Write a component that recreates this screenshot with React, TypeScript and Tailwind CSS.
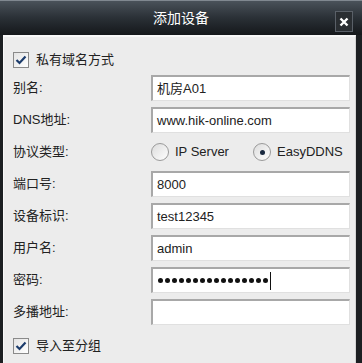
import React from 'react';

const cjk = "font-['Liberation_Sans','Noto_Sans_CJK_SC',sans-serif]";

const Check = () => (
  <div className="w-[16px] h-[16px] border border-[#8a8a8a] bg-gradient-to-br from-[#e4e4e4] to-white flex items-center justify-center shrink-0">
    <svg width="12" height="10" viewBox="0 0 12 10">
      <path d="M1.5 5 L4.5 8 L10.5 1.5" fill="none" stroke="#1c3c6c" strokeWidth="2.2" />
    </svg>
  </div>
);

const Field = ({ label, value, children }: { label: string; value?: string; children?: React.ReactNode }) => (
  <div className="flex items-center h-[26px]">
    <div className="w-[138px] text-[13px] text-[#222]">{label}</div>
    <div className="flex-1 h-[26px] bg-white border-t-2 border-l-2 border-t-[#a8a8a8] border-l-[#a8a8a8] border-r border-b border-r-[#e0e0e0] border-b-[#e0e0e0] flex items-center px-[4px] text-[13px] text-[#222]">
      {value}
      {children}
    </div>
  </div>
);

const Radio = ({ on, label }: { on?: boolean; label: string }) => (
  <div className="flex items-center gap-[6px]">
    <div className="w-[18px] h-[18px] rounded-full border border-[#9a9a9a] bg-gradient-to-br from-[#dcdcdc] to-white flex items-center justify-center">
      {on && <div className="w-[5px] h-[5px] rounded-full bg-[#1a2a40]" />}
    </div>
    <span className="text-[13px] text-[#222]">{label}</span>
  </div>
);

export default function App() {
  return (
    <div className={`w-[362px] h-[363px] bg-[#1c1f22] flex flex-col ${cjk}`}>
      {/* title bar */}
      <div className="h-[35px] shrink-0 bg-gradient-to-b from-[#4a525a] via-[#2a3036] to-[#15181b] border-t border-t-[#808890] relative flex items-center justify-center">
        <span className="text-white text-[14px]">添加设备</span>
        <div className="absolute right-[9px] top-[10px] w-[18px] h-[21px] bg-[#2a2e32] border border-[#5a6068] flex items-center justify-center">
          <svg width="10" height="10" viewBox="0 0 10 10">
            <path d="M1.5 1.5 L8.5 8.5 M8.5 1.5 L1.5 8.5" stroke="#fff" strokeWidth="2.4" />
          </svg>
        </div>
      </div>
      {/* body */}
      <div className="flex-1 ml-[3px] mr-[6px] bg-[#ececec] border-t-2 border-l border-r border-t-[#f8f8f8] border-l-[#f8f8f8] border-r-[#d4d4d4] pl-[9px] pr-[5px] pt-[15px]">
        <div className="flex items-center gap-[7px] h-[16px] text-[13px] text-[#222]">
          <Check />
          <span>私有域名方式</span>
        </div>
        <div className="flex flex-col gap-[6px] mt-[7px]">
          <Field label="别名:" value="机房A01" />
          <Field label="DNS地址:" value="www.hik-online.com" />
          <div className="flex items-center h-[26px]">
            <div className="w-[138px] text-[13px] text-[#222]">协议类型:</div>
            <div className="flex items-center gap-[14px]">
              <div className="w-[88px]"><Radio label="IP Server" /></div>
              <Radio on label="EasyDDNS" />
            </div>
          </div>
          <Field label="端口号:" value="8000" />
          <Field label="设备标识:" value="test12345" />
          <Field label="用户名:" value="admin" />
          <Field label="密码:">
            <div className="flex items-center gap-[2px] ml-[1px]">
              {Array.from({ length: 16 }).map((_, i) => (
                <div key={i} className="w-[5px] h-[5px] rounded-full bg-[#111]" />
              ))}
            </div>
            <div className="w-px h-[18px] bg-[#111] ml-[2px]" />
          </Field>
          <Field label="多播地址:" />
        </div>
        <div className="flex items-center gap-[7px] h-[16px] mt-[13px] text-[13px] text-[#222]">
          <Check />
          <span>导入至分组</span>
        </div>
      </div>
    </div>
  );
}
